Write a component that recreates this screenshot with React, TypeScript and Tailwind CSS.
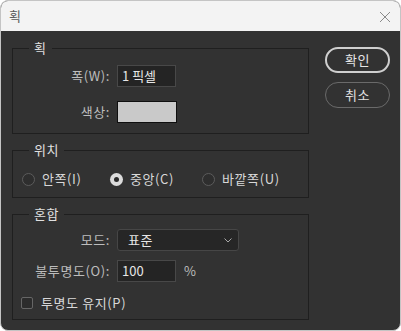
import React from "react";

const font = { fontFamily: '"Noto Sans CJK KR", "Noto Sans", sans-serif' };

function Group({ title, className, children }: { title: string; className?: string; children: React.ReactNode }) {
  return (
    <div className={"relative border border-[#1f1f1f] " + (className ?? "")}>
      <span className="absolute left-[16px] top-[-10px] bg-[#323232] px-[5px] text-[13px] leading-[18px] tracking-[0.6px] text-[#e0e0e0]">
        {title}
      </span>
      {children}
    </div>
  );
}

function Radio({ checked, label, w }: { checked?: boolean; label: string; w: string }) {
  return (
    <div className={"flex items-center gap-[7px] " + w}>
      {checked ? (
        <span className="flex h-[13px] w-[13px] items-center justify-center rounded-full bg-[#dcdcdc]">
          <span className="h-[5px] w-[5px] rounded-full bg-[#2a2a2a]" />
        </span>
      ) : (
        <span className="h-[13px] w-[13px] rounded-full border border-[#5c5c5c] bg-[#2e2e2e]" />
      )}
      <span className="text-[13px] leading-[16px] tracking-[0.6px] text-[#d8d8d8]">{label}</span>
    </div>
  );
}

export default function App() {
  return (
    <div className="h-[331px] w-[401px] bg-white" style={font}>
      <div className="flex h-[331px] w-[401px] flex-col overflow-hidden rounded-[8px] border border-[#c4c4c4] bg-[#323232]">
        <div className="flex h-[30px] shrink-0 items-center justify-between bg-[#f3f3f3] pl-[8px] pr-[9px]">
          <span className="text-[13px] leading-[16px] text-[#5a5a5a]">획</span>
          <svg width="12" height="12" viewBox="0 0 12 12" className="mt-[1px]">
            <path d="M1 1 L11 11 M11 1 L1 11" stroke="#8a8a8a" strokeWidth="1" />
          </svg>
        </div>
        <div className="flex flex-1 pl-[11px] pr-[10px] pt-[17px]">
          <div className="flex w-[297px] flex-col">
            <Group title="획" className="pb-[10px] pt-[16px]">
              <div className="grid grid-cols-[97px_auto] items-center gap-x-[7px] gap-y-[14px]">
                <span className="text-right text-[13px] leading-[16px] tracking-[0.6px] text-[#bdbdbd]">폭(W):</span>
                <div className="flex h-[22px] w-[59px] items-center border border-[#484848] bg-[#242424] pl-[4px] text-[13px] text-[#e6e6e6]">
                  1 픽셀
                </div>
                <span className="text-right text-[13px] leading-[16px] tracking-[0.6px] text-[#bdbdbd]">색상:</span>
                <div className="h-[22px] w-[60px] border border-[#0f0f0f] bg-[#c9c9c9]" />
              </div>
            </Group>
            <Group title="위치" className="mt-[16px] flex h-[48px] items-center pl-[9px] pt-[10px]">
              <Radio label="안쪽(I)" w="w-[88px]" />
              <Radio checked label="중앙(C)" w="w-[92px]" />
              <Radio label="바깥쪽(U)" w="w-auto" />
            </Group>
            <Group title="혼합" className="mt-[16px] h-[106px] pt-[14px]">
              <div className="grid grid-cols-[97px_auto] items-center gap-x-[7px] gap-y-[9px]">
                <span className="text-right text-[13px] leading-[16px] tracking-[0.6px] text-[#bdbdbd]">모드:</span>
                <div className="flex h-[22px] w-[122px] items-center justify-between rounded-[3px] border border-[#464646] bg-[#262626] pl-[10px] pr-[6px]">
                  <span className="text-[13px] tracking-[0.6px] text-[#e6e6e6]">표준</span>
                  <svg width="8" height="5" viewBox="0 0 8 5">
                    <path d="M0.5 0.5 L4 4 L7.5 0.5" stroke="#a8a8a8" strokeWidth="1" fill="none" />
                  </svg>
                </div>
                <span className="text-right text-[13px] leading-[16px] tracking-[0.6px] text-[#bdbdbd]">불투명도(O):</span>
                <div className="flex items-center gap-[8px]">
                  <div className="flex h-[22px] w-[59px] items-center border border-[#484848] bg-[#242424] pl-[4px] text-[13px] text-[#e6e6e6]">
                    100
                  </div>
                  <span className="text-[13px] text-[#bdbdbd]">%</span>
                </div>
              </div>
              <div className="mt-[13px] flex items-center gap-[8px] pl-[8px]">
                <span className="h-[12px] w-[12px] rounded-[2px] border border-[#666] bg-[#2c2c2c]" />
                <span className="text-[13px] leading-[16px] tracking-[0.6px] text-[#d8d8d8]">투명도 유지(P)</span>
              </div>
            </Group>
          </div>
          <div className="ml-[16px] flex w-[65px] flex-col gap-[9px]">
            <button className="mt-[-1px] flex h-[26px] w-[65px] items-center justify-center rounded-full border-2 border-[#cfcfcf] text-[13px] tracking-[0.6px] text-[#e6e6e6]">
              확인
            </button>
            <button className="flex h-[26px] w-[65px] items-center justify-center rounded-full border border-[#6a6a6a] text-[13px] tracking-[0.6px] text-[#e0e0e0]">
              취소
            </button>
          </div>
        </div>
      </div>
    </div>
  );
}
